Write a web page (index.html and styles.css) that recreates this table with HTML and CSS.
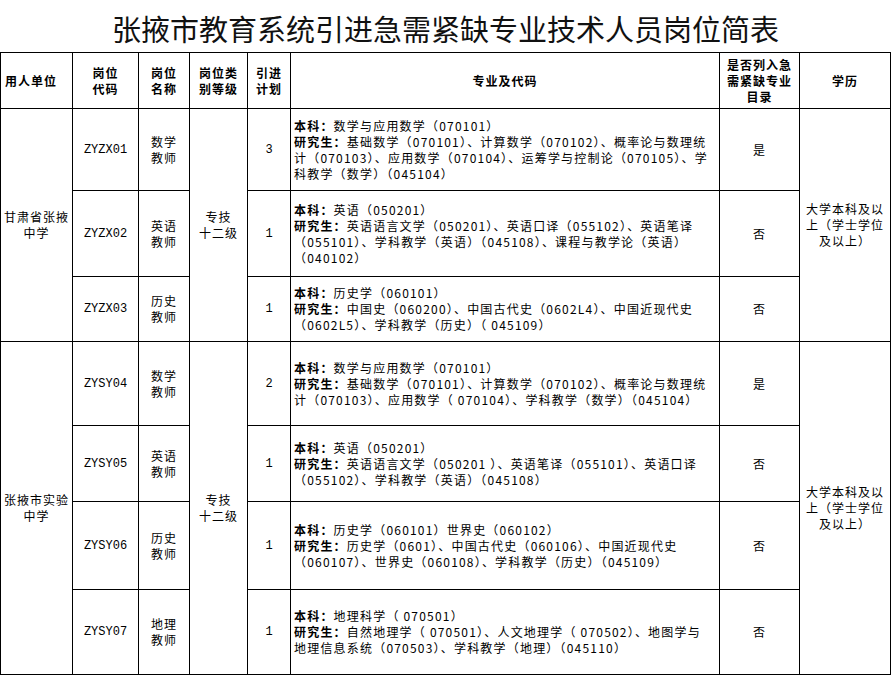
FILE: index.html
```html
<!DOCTYPE html>
<html lang="zh-CN">
<head>
<meta charset="utf-8">
<title>张掖市教育系统引进急需紧缺专业技术人员岗位简表</title>
<link rel="stylesheet" href="styles.css">
</head>
<body>
<div class="page">
  <h1 class="title">张掖市教育系统引进急需紧缺专业技术人员岗位简表</h1>
  <table class="grid">
    <colgroup>
      <col class="c-unit"><col class="c-code"><col class="c-name"><col class="c-level"><col class="c-plan"><col class="c-major"><col class="c-urgent"><col class="c-edu">
    </colgroup>
    <thead>
      <tr class="r-head">
        <th class="left">用人单位</th>
        <th>岗位<br>代码</th>
        <th>岗位<br>名称</th>
        <th>岗位类<br>别等级</th>
        <th>引进<br>计划</th>
        <th>专业及代码</th>
        <th class="tight">是否列入急<br>需紧缺专业<br>目录</th>
        <th>学历</th>
      </tr>
    </thead>
    <tbody>
      <tr class="r1">
        <td rowspan="3">甘肃省张掖<br>中学</td>
        <td class="code">ZYZX01</td>
        <td>数学<br>教师</td>
        <td rowspan="3">专技<br>十二级</td>
        <td class="code">3</td>
        <td class="major"><b>本科：</b>数学与应用数学（070101）<br><b>研究生：</b>基础数学（070101）、计算数学（070102）、概率论与数理统<br>计（070103）、应用数学（070104）、运筹学与控制论（070105）、学<br>科教学（数学）（045104）</td>
        <td>是</td>
        <td rowspan="3" class="edu">大学本科及以<br>上（学士学位<br>及以上）</td>
      </tr>
      <tr class="r2">
        <td class="code">ZYZX02</td>
        <td>英语<br>教师</td>
        <td class="code">1</td>
        <td class="major"><b>本科：</b>英语（050201）<br><b>研究生：</b>英语语言文学（050201）、英语口译（055102）、英语笔译<br>（055101）、学科教学（英语）（045108）、课程与教学论（英语）<br>（040102）</td>
        <td>否</td>
      </tr>
      <tr class="r3">
        <td class="code">ZYZX03</td>
        <td>历史<br>教师</td>
        <td class="code">1</td>
        <td class="major"><b>本科：</b>历史学（060101）<br><b>研究生：</b>中国史（060200）、中国古代史（0602L4）、中国近现代史<br>（0602L5）、学科教学（历史）（ 045109）</td>
        <td>否</td>
      </tr>
      <tr class="r4">
        <td rowspan="4">张掖市实验<br>中学</td>
        <td class="code">ZYSY04</td>
        <td>数学<br>教师</td>
        <td rowspan="4">专技<br>十二级</td>
        <td class="code">2</td>
        <td class="major"><b>本科：</b>数学与应用数学（070101）<br><b>研究生：</b>基础数学（070101）、计算数学（070102）、概率论与数理统<br>计（070103）、应用数学（ 070104）、学科教学（数学）（045104）</td>
        <td>是</td>
        <td rowspan="4" class="edu">大学本科及以<br>上（学士学位<br>及以上）</td>
      </tr>
      <tr class="r5">
        <td class="code">ZYSY05</td>
        <td>英语<br>教师</td>
        <td class="code">1</td>
        <td class="major"><b>本科：</b>英语（050201）<br><b>研究生：</b>英语语言文学（050201 ）、英语笔译（055101）、英语口译<br>（055102）、学科教学（英语）（045108）</td>
        <td>否</td>
      </tr>
      <tr class="r6">
        <td class="code">ZYSY06</td>
        <td>历史<br>教师</td>
        <td class="code">1</td>
        <td class="major"><b>本科：</b>历史学（060101）世界史（060102）<br><b>研究生：</b>历史学（0601）、中国古代史（060106）、中国近现代史<br>（060107）、世界史（060108）、学科教学（历史）（045109）</td>
        <td>否</td>
      </tr>
      <tr class="r7">
        <td class="code">ZYSY07</td>
        <td>地理<br>教师</td>
        <td class="code">1</td>
        <td class="major"><b>本科：</b>地理科学（ 070501）<br><b>研究生：</b>自然地理学（ 070501）、人文地理学（ 070502）、地图学与<br>地理信息系统（070503）、学科教学（地理）（045110）</td>
        <td>否</td>
      </tr>
    </tbody>
  </table>
</div>
</body>
</html>
```

FILE: styles.css
```css
html, body {
  margin: 0;
  padding: 0;
  background: #ffffff;
}

body {
  font-family: "Noto Sans CJK SC", "Noto Sans", sans-serif;
  color: #000;
}

.page {
  width: 891px;
}

.title {
  margin: 0;
  height: 52px;
  box-sizing: border-box;
  padding-top: 4px;
  display: flex;
  align-items: center;
  justify-content: center;
  font-size: 29px;
  font-weight: 400;
  line-height: 1;
  letter-spacing: 0;
  color: #111;
}

.grid {
  border-collapse: collapse;
  table-layout: fixed;
  width: 891px;
}

.grid th,
.grid td {
  border: 1px solid #000;
  padding: 0;
  font-size: 12px;
  line-height: 16px;
  letter-spacing: 1px;
  text-align: center;
  vertical-align: middle;
}

.grid th {
  font-weight: 700;
}

.grid th.left {
  text-align: left;
  padding-left: 4px;
}

.grid th.tight {
  line-height: 16px;
}

.c-unit { width: 72px; }
.c-code { width: 66px; }
.c-name { width: 51px; }
.c-level { width: 58px; }
.c-plan { width: 43px; }
.c-major { width: 429px; }
.c-urgent { width: 80px; }
.c-edu { width: 91px; }

.r-head { height: 56px; }
.r1 { height: 82px; }
.r2 { height: 86px; }
.r3 { height: 65px; }
.r4 { height: 84px; }
.r5 { height: 76px; }
.r6 { height: 88px; }
.r7 { height: 85px; }

.grid td.code {
  font-family: "Liberation Mono", "DejaVu Sans Mono", monospace;
  letter-spacing: 0;
}

.grid td.major {
  text-align: left;
  padding-left: 3px;
  white-space: nowrap;
  letter-spacing: 1.2px;
}

.grid td.major b {
  font-weight: 700;
}

.grid td.edu {
  padding: 0 2px;
}
```
